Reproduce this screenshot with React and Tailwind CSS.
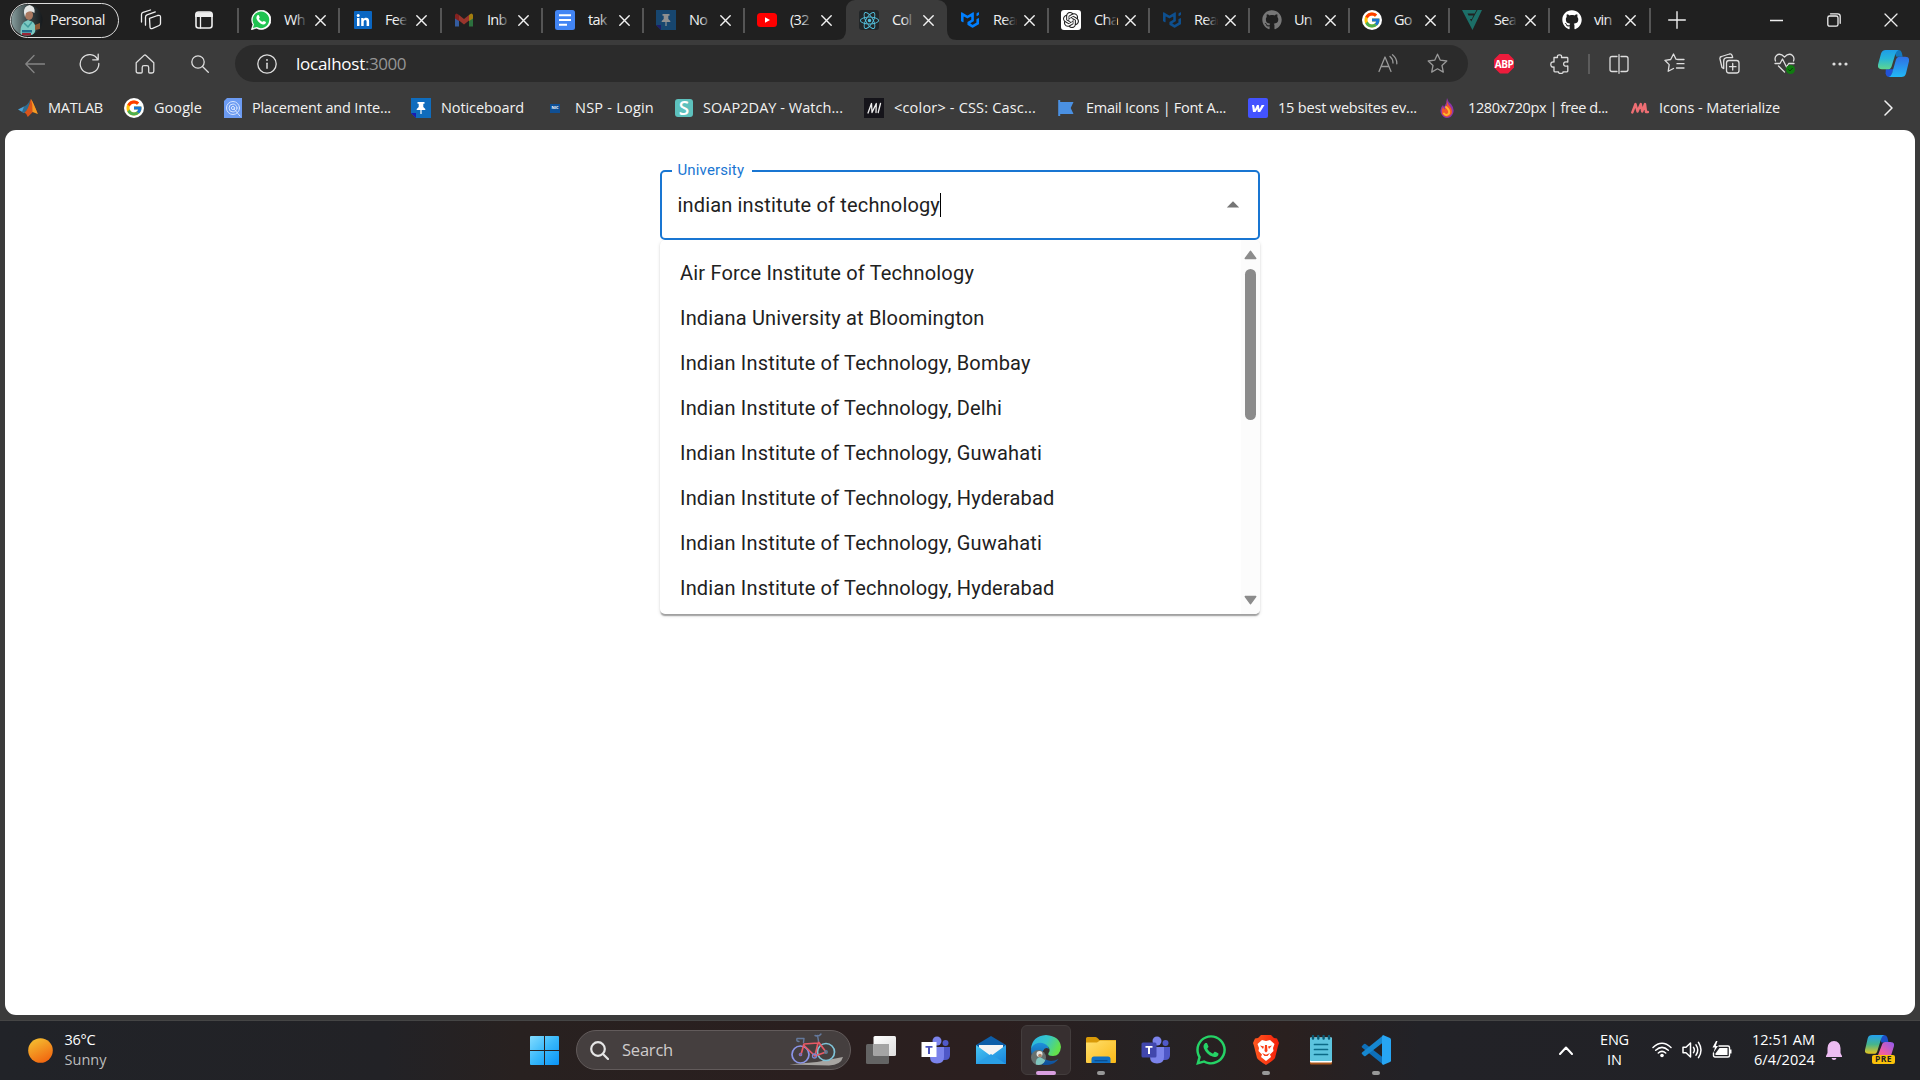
import { useLayoutEffect, useRef, useState } from "react";
import { FcGoogle } from "react-icons/fc";
import { FaGithub, FaWhatsapp } from "react-icons/fa";
import { SiMui, SiOpenai, SiReact } from "react-icons/si";

/* Text set to a given width by adjusting its letter spacing. */
function Fit({ w, children, className = "" }) {
  const ref = useRef(null);
  const [gap, setGap] = useState(0);
  useLayoutEffect(() => {
    const natural = ref.current.getBoundingClientRect().width;
    setGap((w - natural) / String(children).length);
  }, [w, children]);
  return (
    <span ref={ref} className={`inline-block whitespace-pre ${className}`} style={{ letterSpacing: `${gap}px` }}>
      {children}
    </span>
  );
}

const Svg = ({ w = 20, h = w, vb = `0 0 ${w} ${h}`, sw = 1.3, children, className = "" }) => (
  <svg width={w} height={h} viewBox={vb} fill="none" stroke="currentColor" strokeWidth={sw} strokeLinecap="round" strokeLinejoin="round" className={`block shrink-0 ${className}`}>
    {children}
  </svg>
);

/* ---------- favicons ---------- */
const WhatsAppBadge = () => (
  <Svg>
    <path d="M0.5 19.5 2 14.6A9.6 9.6 0 1 1 5.6 18.2Z" fill="#fff" stroke="#fff" strokeWidth=".8" />
    <path d="M1.9 18.1 3 14.4A8.3 8.3 0 1 1 5.9 17.1Z" fill="#1fc351" stroke="none" />
    <path d="M6.3 5.4c.5-.5 1.3-.5 1.6.1l.8 1.7c.2.6-.7 1.2-.7 1.6.6 1.4 1.8 2.5 3.2 3 .5.1 1-.9 1.6-.9l1.8.9c.5.3.4 1.2-.1 1.7-1.2 1.3-3.1 1.100-5-.1-1.700-1-3.100-2.600-3.900-4.400-.4-1.400-.1-2.700.7-3.600Z" fill="#fff" stroke="none" />
  </Svg>
);
const LinkedIn = () => (
  <Svg w={18}>
    <rect width="18" height="18" rx="1" fill="#0a66c2" stroke="none" />
    <path d="M3 7h2.500v8H3zM7.200 7h2.400v1.200c.5-.9 1.400-1.400 2.600-1.400 2.200 0 2.900 1.400 2.900 3.500V15h-2.500v-4.200c0-1.200-.3-1.900-1.300-1.900-1.100 0-1.600.8-1.600 1.900V15H7.200z" fill="#fff" stroke="none" />
    <circle cx="4.200" cy="4.400" r="1.500" fill="#fff" stroke="none" />
  </Svg>
);
const Gmail = () => (
  <Svg w={18} h={14} className="opacity-60">
    <path d="M0 2v11.500h4V5z" fill="#4285f4" stroke="none" />
    <path d="M14 5v8.500h4V2z" fill="#34a853" stroke="none" />
    <path d="M0 2v3.500L4 8V2Q1-1 0 2Z" fill="#c5221f" stroke="none" />
    <path d="M4 2l5 4 5-4v5.500L9 11.500 4 7.500z" fill="#ea4335" stroke="none" />
    <path d="M14 2v6l4-2.500V2q-1-3-4 0Z" fill="#fbbc04" stroke="none" />
  </Svg>
);
const Docs = () => (
  <Svg>
    <rect width="20" height="20" rx="2.500" fill="#4285f4" stroke="none" />
    <path d="M4 5.300h12M4 10h12M4 14.700h8" stroke="#fff" strokeWidth="2" strokeLinecap="butt" />
  </Svg>
);
const Pin = ({ dim }) => (
  <Svg className={dim ? "opacity-50" : ""}>
    <path d="M0 0h20v20H5L0 15z" fill="#0f6cbd" stroke="none" />
    <path d="M0 15h5v5z" fill="#1b1bb3" stroke="none" />
    <path d="M6.500 4h7v1.800h-1.200V9l2 2v1h-3.700v4h-1.200v-4H5.700v-1l2-2V5.800H6.500z" fill="#fff" stroke="none" />
  </Svg>
);
const YouTube = () => (
  <Svg w={20} h={14}>
    <rect width="20" height="14" rx="3.500" fill="#f00" stroke="none" />
    <path d="M8 4.200v5.600l5-2.800z" fill="#fff" stroke="none" />
  </Svg>
);
const ReactIcon = () => (
  <span className="flex size-5 items-center justify-center rounded-[3px] bg-[#222628]">
    <SiReact className="size-[19px] text-[#53c1de]" />
  </span>
);
const ChatGpt = () => (
  <span className="flex size-5 items-center justify-center rounded-[3px] bg-white">
    <SiOpenai className="size-4 text-[#222]" />
  </span>
);
const GoogleDot = () => (
  <span className="flex size-5 items-center justify-center rounded-full bg-white">
    <FcGoogle className="size-[18px]" />
  </span>
);
const FvLogo = () => (
  <Svg>
    <path d="M0 0h14.500L12.700 3.600H5.500l1 2h5L9.800 9H8l1.200 2.500L15.500 0H20L10.500 20z" fill="#1c6f68" stroke="none" />
  </Svg>
);

const tabs = [
  { icon: <WhatsAppBadge />, label: "Wh", w: "w-[101px]" },
  { icon: <LinkedIn />, label: "Fee", w: "w-[102px]", nudge: true },
  { icon: <Gmail />, label: "Inb", w: "w-[101px]" },
  { icon: <Docs />, label: "tak", w: "w-[101px]" },
  { icon: <Pin dim />, label: "No", w: "w-[101px]" },
  { icon: <YouTube />, label: "(32", w: "w-[102px]" },
  { icon: <ReactIcon />, label: "Col", w: "w-[101px]", active: true },
  { icon: <SiMui className="size-[18px] text-[#007fff]" />, label: "Rea", w: "w-[101px]", bare: true },
  { icon: <ChatGpt />, label: "Cha", w: "w-[101px]" },
  { icon: <SiMui className="size-[18px] text-[#0e4f8e]" />, label: "Rea", w: "w-[100px]", narrow: true },
  { icon: <FaGithub className="size-5 text-[#777]" />, label: "Un", w: "w-[100px]", narrow: true },
  { icon: <GoogleDot />, label: "Go", w: "w-[100px]", narrow: true },
  { icon: <FvLogo />, label: "Sea", w: "w-[100px]", narrow: true },
  { icon: <FaGithub className="size-5 text-white" />, label: "vin", w: "w-[100px]", narrow: true },
];

function Tab({ icon, label, w, active, bare, narrow, nudge }) {
  const fade = active ? "to-[#3b3b3b]" : "to-[#202020]";
  return (
    <div className={`relative flex h-10 shrink-0 items-center ${w} ${active ? "rounded-t-[9px] bg-[#3b3b3b]" : ""}`}>
      {active ? (
        <>
          <Svg w={10} className="absolute bottom-0 -left-[10px]"><path d="M10 0v10H0Q10 10 10 0Z" fill="#3b3b3b" stroke="none" /></Svg>
          <Svg w={10} className="absolute -right-[10px] bottom-0"><path d="M0 0v10h10Q0 10 0 0Z" fill="#3b3b3b" stroke="none" /></Svg>
        </>
      ) : null}
      <span className={`-ml-px h-[25px] w-[2px] ${active || bare ? "" : "bg-[#555]"}`} />
      <span className={`flex w-5 shrink-0 justify-center ${nudge ? "mr-[-1px] ml-[13px]" : "ml-[12px]"}`}>{icon}</span>
      <span className={`relative w-[23px] shrink-0 text-[14.5px] leading-5 whitespace-nowrap tracking-[-0.700px] text-[#f2f2f2] ${narrow ? "ml-[12px]" : "ml-[13px]"}`}>
        {label}
        <span className={`absolute inset-y-0 right-0 w-[12px] bg-linear-to-r from-transparent ${fade}`} />
      </span>
      <Svg w={11} sw={1.4} className="ml-[8px] mt-px text-[#f2f2f2]"><path d="M.8.8l9.400 9.400M10.200.8.8 10.200" /></Svg>
    </div>
  );
}

const Avatar = () => (
  <svg width="32" height="32" viewBox="0 0 32 32" className="block">
    <defs>
      <clipPath id="avatar"><circle cx="16" cy="16" r="15.500" /></clipPath>
      <linearGradient id="avatarBg"><stop offset="0" stopColor="#8aa0a0" /><stop offset=".5" stopColor="#3c4a4c" /><stop offset="1" stopColor="#15181b" /></linearGradient>
    </defs>
    <g clipPath="url(#avatar)">
      <rect width="32" height="32" fill="url(#avatarBg)" />
      <path d="M10 32Q8 23 13 18l4-2 5 2q4 4 2 10l-3 4z" fill="#7cc8c2" />
      <path d="M13 19l4 4 4-5" stroke="#3f9a9b" strokeWidth="1.500" fill="none" />
      <ellipse cx="18" cy="11" rx="4" ry="5" fill="#a87860" />
      <path d="M13 9Q12.500 2 18.500 1 24.500 2 23.500 9q-4.500-3.500-8.500 0l-1 4z" fill="#e4e6e5" />
      <path d="M24 21l5-2v6l-5 1z" fill="#8a5735" />
      <path d="M11 26h10v2.500H11z" fill="#236b8b" />
      <path d="M11 29h9v3h-9z" fill="#9c2536" />
    </g>
  </svg>
);

function TabStrip() {
  return (
    <div className="flex h-10 items-center bg-[#202020] text-[#eee]">
      <div className="ml-[10px] flex h-[35px] w-[109px] shrink-0 items-center rounded-full border-[1.5px] border-[#ddd]">
        <Avatar />
        <Fit w={55} className="ml-[7px] text-[14.5px] leading-5">Personal</Fit>
      </div>
      <div className="flex w-[118px] items-center">
        <Svg w={22} className="ml-[21px]" sw={1.300}>
          <path d="M9.500 9.300 17.500 6.500q3-.8 3 1.500v6.500q0 1.500-1.300 2l-6.600 2.800q-2.600 1-2.600-1.300z" />
          <path d="M5.500 16.200V8.200q0-1.700 1.500-2.300l8.300-3M1.500 13V5.500Q1.500 4 3 3.400L10.500 1" />
        </Svg>
        <Svg w={18} className="ml-[33px]" sw={1.600}>
          <rect x="1" y="1" width="16" height="16" rx="2.500" /><path d="M1 4.500h16M2 2.800h14" strokeWidth="3" /><path d="M5.500 5v12" strokeWidth="1.300" />
        </Svg>
      </div>
      <div className="ml-px flex">
        {tabs.map((t, i) => <Tab key={i} {...t} />)}
      </div>
      <span className="h-[25px] w-[2px] shrink-0 bg-[#555]" />
      <Svg w={18} sw={1.400} className="ml-[17px]"><path d="M9 .7v16.600M.7 9h16.600" /></Svg>
      <div className="ml-[62px] flex flex-1 items-center">
        <span className="flex w-[57px] justify-center"><Svg w={13} sw={1.300}><path d="M0 6.500h13" /></Svg></span>
        <span className="flex w-[57px] justify-center"><Svg w={14}><rect x=".8" y="3" width="10.200" height="10.200" rx="1.800" /><path d="M3.500.8h7.200q2.500 0 2.500 2.500v7" /></Svg></span>
        <span className="flex w-[58px] justify-center"><Svg w={14}><path d="M1 1l12 12M13 1 1 13" /></Svg></span>
      </div>
    </div>
  );
}

const Cell = ({ w = "w-[55px]", children }) => <span className={`flex shrink-0 items-center justify-center ${w}`}>{children}</span>;

const CopilotLogo = () => (
  <svg width="31" height="27" viewBox="0 0 32 28" className="block">
    <defs>
      <linearGradient id="cpA" x1="0" y1="0" x2="0" y2="1"><stop offset="0" stopColor="#1e9de8" /><stop offset=".45" stopColor="#27b5d8" /><stop offset="1" stopColor="#5fd68e" /></linearGradient>
      <linearGradient id="cpB" x1="0" y1="0" x2="0" y2="1"><stop offset="0" stopColor="#2f6fe4" /><stop offset="1" stopColor="#22b8f6" /></linearGradient>
    </defs>
    <path d="M8 20h8l-3 8h-1q-3.500 0-4.200-4z" fill="#2153d8" />
    <path d="M16 0h5q3 0 3.800 3.500l.7 3.500H19z" fill="#1478bd" />
    <path d="M8 0h13q-2 1-3 4l-4 13q-1 3-4 3H4q-5 0-4-5l3-11Q4 0 8 0Z" fill="url(#cpA)" />
    <path d="M24 28H11q2.500-1 3.500-4l4-14q1-3 4-3H28q5 0 4 5l-3 12q-1 4-5 4Z" fill="url(#cpB)" />
  </svg>
);

function Toolbar() {
  return (
    <div className="flex h-[47px] items-center bg-[#3b3b3b] pl-[7px] text-[#dedede]">
      <Cell><Svg className="text-[#858585]"><path d="M19.500 10H.8M9 1.500.8 10 9 18.500" /></Svg></Cell>
      <Cell><Svg w={21}><path d="M18.700 6.500A9.300 9.300 0 1 0 19.800 10.500M19.200 1.200v5.600h-5.500" /></Svg></Cell>
      <Cell><Svg><path d="M1.200 8.700 9 1.400q1-.9 2 0l7.800 7.300v8.500q0 1.800-1.800 1.800h-2.300q-1 0-1-1v-4.500q0-1.800-1.800-1.800H9q-1.800 0-1.800 1.800V18q0 1-1 1H3q-1.800 0-1.800-1.800z" /></Svg></Cell>
      <Cell><Svg w={18}><circle cx="7" cy="7" r="6.200" /><path d="M11.500 11.500l5.800 5.800" /></Svg></Cell>
      <div className="ml-[8px] flex h-[37px] w-[1233px] shrink-0 items-center rounded-full bg-[#2b2b2b]">
        <Svg className="ml-[22px]"><circle cx="10" cy="10" r="9.200" /><path d="M10 9.200v5" strokeWidth="1.500" /><circle cx="10" cy="6" r=".9" fill="currentColor" stroke="none" /></Svg>
        <span className="ml-[19px] text-[17px] leading-6">
          <Fit w={69} className="text-white">localhost</Fit>
          <Fit w={41} className="text-[#959595]">:3000</Fit>
        </span>
        <Svg className="ml-auto text-[#999]"><path d="M1 17.500 7 3l6 14.500M3 12.500h8M12 2.500q3 2.500 3 6.500M14.500.8q4.500 3.500 4.300 9" /></Svg>
        <Svg w={21} className="mr-[20px] ml-[29px] text-[#999]"><path d="M10.500 1.200l2.800 6 6.500.8-4.800 4.500 1.300 6.600-5.800-3.300-5.800 3.300L6 12.500 1.200 8l6.500-.8z" /></Svg>
      </div>
      <span className="w-2" />
      <Cell w="w-[56px]">
        <span className="flex size-[20px] items-center justify-center bg-[#ed1c3c] text-[10px] leading-none font-bold tracking-[-0.5px] text-white [clip-path:polygon(30%_0,70%_0,100%_30%,100%_70%,70%_100%,30%_100%,0_70%,0_30%)]">ABP</span>
      </Cell>
      <Cell w="w-[56px]"><Svg><path d="M4 3.500h3.500q-.5-2.700 2-2.700t2 2.700H17q.8 0 .8.800V8q-4.200-.8-4.200 2t4.200 2v5q0 .8-.8.800h-4q.3 1.700-2.200 1.700T8.500 17.800H4.800q-.8 0-.8-.8v-4Q.8 13.500.8 10.500T4 8z" /></Svg></Cell>
      <span className="mr-px h-5 w-[2px] bg-[#5c5c5c]" />
      <Cell w="w-[56px]"><Svg w={20}><path d="M8 2.500H3Q1 2.500 1 4.500v11q0 2 2 2h5M12 2.500h5q2 0 2 2v11q0 2-2 2h-5M10 .7v18.600" /></Svg></Cell>
      <Cell><Svg w={21}><path d="M14 6.500l-2-.3L9.500 1 6.700 6.500.9 7.300l4.300 4.300-1 6.700 5.300-2.800M20 6.500h-5.500M20 10.700h-7M20 15h-7.500" /></Svg></Cell>
      <Cell><Svg w={21}><rect x="7.500" y="7.500" width="12.500" height="12.500" rx="2.500" /><path d="M13.700 10.500v6.500M10.500 13.700H17M4.500 15.500 3 14.500 1 6Q.6 4 2.500 3.500l8-2.500q1.800-.5 2.500 1.300l.7 2.200M4.700 15.500V8q0-3 3-3.300h5.500" /></Svg></Cell>
      <Cell>
        <Svg w={21}><path d="M1.500 8Q.2 4.500 2.500 2.500 6-.5 10.500 4q4.500-4.500 8-1.500 2.300 2 1 5.500M1 10.500h5L8.500 6l4 8 2.200-3.500H20M4.500 13l6 6" /><circle cx="16.500" cy="16.500" r="4.500" fill="#107c10" stroke="none" /><path d="M14.500 16.600l1.400 1.400 2.500-2.700" stroke="#0a3d0a" strokeWidth="1" /></Svg>
      </Cell>
      <Cell><Svg w={16} h={4}><g fill="currentColor" stroke="none"><circle cx="2" cy="2" r="1.600" /><circle cx="8" cy="2" r="1.600" /><circle cx="14" cy="2" r="1.600" /></g></Svg></Cell>
      <Cell w="w-[53px]"><CopilotLogo /></Cell>
    </div>
  );
}

/* ---------- bookmarks ---------- */
const Matlab = () => (
  <Svg>
    <path d="M0 11.500 6 8.500l3 2.500-3 4z" fill="#4aa3d8" stroke="none" />
    <path d="M6 8.500Q10 7 12.500 1L10 12l-4 3-2-1z" fill="#2f6c8f" stroke="none" />
    <path d="M12.800.8Q15 4 19.800 16q-3-3-5-2l-5 5q-1.500-4-3.300-4.500Q10 13 12.800.8Z" fill="#d9541a" stroke="none" />
    <path d="M13 1q2 6 1.500 13l5.300 2Q15 4 13 1Z" fill="#f59b23" stroke="none" />
  </Svg>
);
const Placement = () => (
  <Svg w={18} h={20}>
    <path d="M3 0h15v20H0V3z" fill="#6c9bf2" stroke="none" />
    <g stroke="#d7e5ff" strokeWidth="1"><circle cx="9" cy="10" r="6.500" /><circle cx="9" cy="10" r="4" /><circle cx="9" cy="10" r="1.600" /><path d="M10 11l6 7" /></g>
  </Svg>
);
const bookmarks = [
  { icon: <Matlab />, label: "MATLAB", text: 55, w: "w-[106px]" },
  { icon: <GoogleDot />, label: "Google", text: 48, w: "w-[99px]" },
  { icon: <Placement />, label: "Placement and Inte...", text: 139, w: "w-[188px]", near: true },
  { icon: <Pin />, label: "Noticeboard", text: 83, w: "w-[134px]" },
  { icon: <span className="flex h-[9px] w-[10px] items-center justify-center bg-[#0f4f94] text-[4px] leading-none font-bold text-white">NIC</span>, label: "NSP - Login", text: 79, w: "w-[129px]" },
  { icon: <span className="flex size-[18px] items-center justify-center rounded-[3px] bg-[#5dc1bd] text-[19px] leading-none font-semibold text-white">S</span>, label: "SOAP2DAY - Watch...", text: 140, w: "w-[190px]", near: true },
  { icon: <Svg><rect width="20" height="20" fill="#15141a" stroke="none" /><path d="M4 15 7.500 5.500 8 14.500 12.300 5.500 12 14.500M16.500 5.500l-2.300 9" stroke="#eee" strokeWidth="1.300" /></Svg>, label: "<color> - CSS: Casc...", text: 142, w: "w-[192px]" },
  { icon: <Svg w={16}><path d="M1.200 0v16" stroke="#4a90e2" strokeWidth="2" /><path d="M1 2h14.500L12.700 8l2.800 6H1z" fill="#4a90e2" stroke="none" /></Svg>, label: "Email Icons | Font A...", text: 140, w: "w-[192px]" },
  { icon: <Svg><rect width="20" height="20" rx="2" fill="#4353ff" stroke="none" /><path d="M4 7h2q.8 2 .9 4.300L9 7h1.800l.7 4.300L13.600 7H16.500l-4.300 7H9.800L9.400 11l-1.900 3H5z" fill="#fff" stroke="none" /></Svg>, label: "15 best websites ev...", text: 139, w: "w-[190px]" },
  { icon: <Svg w={14} h={20}><path d="M7 0q1 4 4 6 4 5 2 9.500Q11 20 7 20T.8 15Q-.5 10 3 7l1 2Q7 5 7 0Z" fill="#8d35a8" stroke="none" /><path d="M6.500 2q1 4 3.500 6.500 3 4 1.500 7.500-2 3-4.500 3t-5-3Q1 12 3 9l1.500 2.500Q8 7 6.500 2Z" fill="#f4572b" stroke="none" /><path d="M6 9q4 3 3 6.500-3 3-5 0" stroke="#ffb52e" strokeWidth="2" /></Svg>, label: "1280x720px | free d...", text: 140, w: "w-[192px]", far: true },
  { icon: <Svg w={18} h={12}><path d="M1.300 10.500 4.500 2l2 7.500L9.800 2l1.400 7.500L14 2l1 8h2" stroke="#ee6e73" strokeWidth="2.400" /></Svg>, label: "Icons - Materialize", text: 121, w: "w-[160px]", near: true },
];

function Bookmarks() {
  return (
    <div className="flex h-[43px] items-center bg-[#3b3b3b] pb-[1px] pl-[18px] text-[#f2f2f2]">
      {bookmarks.map((b) => (
        <div key={b.label} className={`flex shrink-0 items-center ${b.w}`}>
          <span className={`flex w-5 shrink-0 justify-center ${b.far ? "-ml-px mr-px" : ""}`}>{b.icon}</span>
          <Fit w={b.text} className={`text-[14.5px] leading-5 ${b.near ? "ml-[9px]" : "ml-[10px]"}`}>{b.label}</Fit>
        </div>
      ))}
      <Svg w={9} h={16} sw={1.500} className="mr-[27px] ml-auto"><path d="M1 1l7 7-7 7" /></Svg>
    </div>
  );
}

/* ---------- page ---------- */
const options = [
  "Air Force Institute of Technology",
  "Indiana University at Bloomington",
  "Indian Institute of Technology, Bombay",
  "Indian Institute of Technology, Delhi",
  "Indian Institute of Technology, Guwahati",
  "Indian Institute of Technology, Hyderabad",
  "Indian Institute of Technology, Guwahati",
  "Indian Institute of Technology, Hyderabad",
];

function Autocomplete() {
  return (
    <div className="mx-auto w-[600px] pt-10 font-[Roboto,sans-serif] text-[20px] text-[#212121]">
      <div className="relative flex h-[70px] items-center rounded-[5px] border-2 border-[#1976d2] pl-[15.500px]">
        <span className="absolute -top-[12px] left-[10px] h-5 w-[80px] bg-white pl-[5.500px] text-[15px] leading-[20px] tracking-[0.14px] text-[#1976d2]">University</span>
        <Fit w={262.5}>indian institute of technology</Fit>
        <span className="h-6 w-px bg-black" />
        <Svg w={14} h={7} className="mr-[18px] mb-[2px] ml-auto"><path d="M.8 6.500 7 .3l6.200 6.200z" fill="#757575" stroke="none" /></Svg>
      </div>
      <div className="flex h-[374px] overflow-hidden rounded-[5px] bg-white shadow-[0_2.500px_1.250px_-1.250px_rgba(0,0,0,0.2),0_1.250px_1.250px_0_rgba(0,0,0,0.14),0_1.250px_3.750px_0_rgba(0,0,0,0.12)]">
        <ul className="flex-1 pt-[10px]">
          {options.map((o, i) => (
            <li key={i} className="flex h-[45px] items-center pl-5 leading-[30px] tracking-[0.188px]">{o}</li>
          ))}
        </ul>
        <div className="flex w-[19px] flex-col items-center bg-[#fcfcfc] pt-[10px] pb-[9px]">
          <Svg w={13} h={10}><path d="M1.200 8.500 6.500 1.200l5.300 7.300z" fill="#8b8b8b" stroke="#8b8b8b" /></Svg>
          <span className="mt-[9px] h-[151px] w-[11px] rounded-full bg-[#8b8b8b]" />
          <Svg w={13} h={10} className="mt-auto"><path d="M1.200 1.500h10.600L6.500 8.800z" fill="#8b8b8b" stroke="#8b8b8b" /></Svg>
        </div>
      </div>
    </div>
  );
}

/* ---------- taskbar ---------- */
const Bike = () => (
  <Svg w={56} h={34} className="ml-auto mr-[5px]">
    <path d="M0 31.500 28 29l26-5q-2 8-14 8.500z" fill="#a8a5a2" stroke="none" />
    <g strokeWidth="1.700"><circle cx="11.500" cy="21.500" r="8.500" stroke="#8b95e8" /><circle cx="37" cy="19" r="8.500" stroke="#7fc3d8" /></g>
    <path d="M12 21.500 15 11l14-1L26 23 14.500 12M29.500 9l7.500 10-11 4" stroke="#e85a66" strokeWidth="1.700" />
    <path d="M14.500 9.500 15 5.500H8M8 5.500q-1 3 2 3M29.500 8l-1-5.500M26 2.500q4 1.500 6-1.500" stroke="#64799c" strokeWidth="1.400" />
    <circle cx="25.500" cy="23" r="2" stroke="#7a86d0" /><circle cx="11.500" cy="21.500" r="1.200" stroke="#8070bc" /><circle cx="37" cy="19" r="1.300" stroke="#54819b" />
  </Svg>
);

const Teams = ({ white }) => (
  <Svg w={30} h={28}>
    <g stroke="none">
      <circle cx="24.500" cy="7" r="3" fill="#5059c9" />
      <path d="M18 11h11v8q0 5-5 5h-6z" fill="#4f58c8" />
      <circle cx="16" cy="5" r="4.500" fill="#7b83eb" />
      <path d="M9 11h14v10q0 6.500-7 6.500T9 21z" fill="#7b83eb" />
      <rect x="0.500" y={white ? 6 : 6.500} width="15" height="15" rx={white ? 0 : 1.500} fill={white ? "#fff" : "#4147ad"} />
      <path d="M4.500 10h7v1.800H9V18H7v-6.200H4.500z" fill={white ? "#4b53bc" : "#fff"} />
    </g>
  </Svg>
);

const TaskView = () => (
  <Svg w={30} h={28}>
    <defs><linearGradient id="tv" x2="1" y2="1"><stop stopColor="#fff" /><stop offset="1" stopColor="#ddd" /></linearGradient></defs>
    <g stroke="none"><rect x="0" y="8" width="23" height="20" rx="1.500" fill="#646464" /><rect x="7.500" y="0" width="22.500" height="20" rx="1.500" fill="url(#tv)" /><rect x="7.500" y="8" width="15.500" height="12" fill="#a4a4a4" /></g>
  </Svg>
);

const Mail = () => (
  <Svg w={30} h={28}>
    <defs><linearGradient id="ml" x2="1" y2="1"><stop stopColor="#48c6f3" /><stop offset="1" stopColor="#1683dc" /></linearGradient></defs>
    <g stroke="none"><path d="M0 9 15 0l15 9v3H0z" fill="#0d5ea8" /><path d="M3 9h24v10H3z" fill="#f4f4f4" /><path d="M0 9l15 11L30 9v19H0z" fill="url(#ml)" /><path d="M0 28 15 18l15 10z" fill="#2a9fe6" /></g>
  </Svg>
);

const Edge = () => (
  <Svg w={30}>
    <defs>
      <linearGradient id="eg1" x1="0" y1="0" x2="1" y2=".4"><stop stopColor="#27b3e8" /><stop offset=".55" stopColor="#36c6c8" /><stop offset="1" stopColor="#63e04c" /></linearGradient>
      <linearGradient id="eg2" x1="0" y1="0" x2="0" y2="1"><stop stopColor="#1e94de" /><stop offset="1" stopColor="#0f4d97" /></linearGradient>
      <clipPath id="edgeBadge"><circle cx="7.500" cy="22.500" r="7.500" /></clipPath>
    </defs>
    <g stroke="none">
      <path d="M0 14Q2 6 10 7q7 1 8 7-4-3-6 2-1 9 8 10 4 0 7.500-2Q22 31 13 30 0 28 0 14Z" fill="url(#eg2)" />
      <path d="M0 14Q1 1 15 0q14 1 15 12-1 9-8 9-6 0-4.500-3Q20 15 17 11.500 13 7 7 8 2 9 0 14Z" fill="url(#eg1)" />
      <g clipPath="url(#edgeBadge)"><rect y="15" width="15" height="15" fill="#66706e" /><path d="M5 30q-1-7 4-8l5 3v5z" fill="#80c7c0" /><circle cx="8.500" cy="19" r="3" fill="#e4e4e1" /><circle cx="9" cy="20.500" r="1.800" fill="#b38468" /></g>
    </g>
  </Svg>
);

const Folder = () => (
  <Svg w={30} h={27}>
    <defs><linearGradient id="fd" x2="1" y2="1"><stop stopColor="#ffdf6d" /><stop offset="1" stopColor="#fbb916" /></linearGradient></defs>
    <g stroke="none"><path d="M0 1.500Q0 0 1.500 0h8q1.500 0 2.500 1.500l1.500 1.500H30v4H0z" fill="#d99a08" /><path d="M0 5.500h11L14 3.500h16V25q0 1-1 1H1q-1 0-1-1z" fill="url(#fd)" /><path d="M5.500 26v-4q0-2.500 2.500-2.500h14q2.500 0 2.500 2.500v4z" fill="#0f70c4" /><path d="M8.500 23h13v1.300h-13z" fill="#0b4f90" /></g>
  </Svg>
);

const Notepad = () => (
  <Svg w={22} h={30}>
    <g stroke="none"><rect y="25" width="22" height="4.500" rx="1" fill="#a9571c" /><rect y="2.500" width="22" height="25" rx="1" fill="#fff" /><rect y="2.500" width="22" height="23.500" rx="1" fill="#5cc4de" /></g>
    <path d="M4.500 9.500h13M4.500 14.500h13M4.500 19.500h13" stroke="#0b6a86" strokeWidth="1.700" /><path d="M3 1v2.500M8.300 1v2.500M13.600 1v2.500M19 1v2.500" stroke="#0a5a74" strokeWidth="2.400" />
  </Svg>
);

const VsCode = () => (
  <Svg w={30}>
    <g stroke="none"><path d="M1 11 3 9q.8-.6 1.600 0L22 22.500v7L1 12.500q-.7-.8 0-1.500Z" fill="#0e6fb8" /><path d="M1 19l2 2q.8.600 1.600 0L22 7.500V.5L1 17.500q-.7.800 0 1.500Z" fill="#1687d0" /><path d="M22 0l7 3q1 .5 1 1.500v21q0 1-1 1.500l-7 3-1-1.500V1.500z" fill="#27a5f3" /></g>
  </Svg>
);

const Brave = () => (
  <Svg w={26} h={30}>
    <defs><linearGradient id="br" x2="1"><stop stopColor="#ff5a20" /><stop offset="1" stopColor="#f41f0a" /></linearGradient></defs>
    <g stroke="none"><path d="M8 0h10l3 3 3 .5L26 8l-1 3-3 12q-1 2-9 7-8-5-9-7L1 11 0 8l2-4.500L5 3z" fill="url(#br)" />
      <path d="M13 6l4-1 4.500 4-1.500 4 .5 3-3.500 3.500L18 22l-5 4-5-4 1-2.500L5.500 16l.5-3L4.500 9 9 5z" fill="#fff" />
      <path d="M7 10.500l4 1-1 2.500zM19 10.500l-4 1 1 2.500zM12 10h2l.5 6-1.500 1.500L11.500 16zM9 18l4 1.800L17 18l-2.500 3h-3z" fill="#fb3d15" /></g>
  </Svg>
);

const apps = [
  { icon: <TaskView /> },
  { icon: <Teams white /> },
  { icon: <Mail /> },
  { icon: <Edge />, active: true },
  { icon: <Folder />, open: true },
  { icon: <Teams /> },
  { icon: <FaWhatsapp className="size-[34px] text-[#25d366]" /> },
  { icon: <Brave />, open: true },
  { icon: <Notepad /> },
  { icon: <VsCode />, open: true },
];

const CopilotPre = () => (
  <div className="relative ml-[23px] h-[30px] w-[30px]">
    <svg width="29" height="22" viewBox="0 0 32 28" preserveAspectRatio="none" className="block">
      <defs>
        <linearGradient id="ppA" x1="0" y1="0" x2="0" y2="1"><stop offset="0" stopColor="#23a0f0" /><stop offset=".5" stopColor="#46b58c" /><stop offset="1" stopColor="#e8c51d" /></linearGradient>
        <linearGradient id="ppB" x1="1" y1="0" x2="0" y2="1"><stop offset="0" stopColor="#8e5bf0" /><stop offset=".6" stopColor="#ee5da6" /><stop offset="1" stopColor="#f7776a" /></linearGradient>
      </defs>
      <path d="M16 0h5q3 0 3.800 3.500l1.200 6H18z" fill="#1c50c8" />
      <path d="M8 0h13q-2 1-3 4l-4 15q-1 5-4 5H4q-5 0-4-5l3-15Q4 0 8 0Z" fill="url(#ppA)" />
      <path d="M24 30H11q2.500-1 3.500-5l4-12q1-4 4-4H28q5 0 4 5l-3 11q-1 5-5 5Z" fill="url(#ppB)" />
    </svg>
    <span className="absolute right-0 bottom-[1px] flex h-[9px] w-[23px] items-center justify-center rounded-[2px] bg-[#fbc20a] text-[8.500px] leading-none font-bold tracking-[0.5px] text-[#222]">PRE</span>
  </div>
);

function Taskbar() {
  return (
    <div className="flex h-[60px] shrink-0 items-center border-t border-[#454545] bg-[linear-gradient(90deg,#212328_0%,#222226_20%,#282120_27%,#2a1f1f_42%,#2b1f1f_52%,#252224_60%,#2a201f_67%,#222227_74%,#212226_100%)] pb-px text-white">
      <Svg w={25} className="ml-[27.500px]">
        <defs><linearGradient id="sun" x1=".2" y1="0" x2=".7" y2="1"><stop stopColor="#f4bf31" /><stop offset="1" stopColor="#f1640f" /></linearGradient></defs>
        <circle cx="12.500" cy="12.500" r="12.300" fill="url(#sun)" stroke="none" />
      </Svg>
      <div className="ml-[12px] flex w-[465.500px] shrink-0 flex-col items-start text-[14.5px] leading-5">
        <Fit w={31}>36°C</Fit>
        <Fit w={42} className="text-[#bdbdbd]">Sunny</Fit>
      </div>
      <Svg w={29}>
        <defs><linearGradient id="win" x2="1" y2="1"><stop stopColor="#83dcff" /><stop offset=".5" stopColor="#38b8fa" /><stop offset="1" stopColor="#0993f6" /></linearGradient></defs>
        <path d="M1 0h13v14H0V1Q0 0 1 0ZM15 0h13q1 0 1 1v13H15zM0 15h14v14H1q-1 0-1-1zM15 15h14v13q0 1-1 1H15z" fill="url(#win)" stroke="none" />
      </Svg>
      <div className="ml-[17px] flex h-10 w-[275px] shrink-0 items-center rounded-full border border-[#625b5b] bg-[#453f3f]">
        <Svg w={19} sw={2.200} className="ml-[13px] text-[#e6e6e6]"><circle cx="8" cy="8" r="6.800" /><path d="M13 13l5 5" /></Svg>
        <Fit w={51} className="ml-[13px] text-[16.5px] leading-6 text-[#cfcccc]">Search</Fit>
        <Bike />
      </div>
      <div className="ml-[2.500px] flex">
        {apps.map((a, i) => (
          <div key={i} className="flex w-[55px] justify-center">
            <div className={`relative flex size-[50px] items-center justify-center rounded-md ${a.active ? "border border-[#433d3d] bg-[#372f30]" : ""}`}>
              {a.icon}
              {a.active ? <span className="absolute -bottom-px h-1 w-5 rounded-full bg-[#d99fe0]" /> : null}
              {a.open ? <span className="absolute bottom-0 h-1 w-2 rounded-full bg-[#989898]" /> : null}
            </div>
          </div>
        ))}
      </div>
      <div className="ml-auto flex items-center pr-[25px]">
        <Svg w={14} h={9} sw={2}><path d="M1 8l6-6.500L13 8" /></Svg>
        <div className="ml-[27px] flex w-[29px] flex-col items-center text-[14.5px] leading-5">
          <Fit w={29}>ENG</Fit>
          <Fit w={15}>IN</Fit>
        </div>
        <Svg w={20} h={16} sw={1.500} className="ml-[23px]"><path d="M1 5.500Q10-3 19 5.500M3.700 8.300q6.300-5.800 12.600 0M6.300 11q3.700-3.200 7.400 0" /><circle cx="10" cy="13.500" r="1.800" fill="#fff" stroke="none" /></Svg>
        <Svg w={20} h={18} sw={1.500} className="ml-[10px]"><path d="M1 6.300h3L8.500 2v14L4 11.700H1zM11.500 6.300q1.800 2.700 0 5.400M14 3.800q3.500 5.200 0 10.400M16.500 1.300q5 7.700 0 15.400" /></Svg>
        <Svg w={20} h={18} sw={1.400} className="ml-[10px]"><path d="M7 5h9q1.500 0 1.500 1.500v8q0 1.500-1.500 1.500H3q-1.500 0-1.500-1.500V12" /><path d="M7.500 7H15.500v7H3.500V12.500z" fill="#fff" stroke="none" /><path d="M17.500 8.500h2v4h-2z" fill="#fff" stroke="none" /><path d="M4 0 .5 6.500H3L1.500 11.500 6 5H3.800L5.500 0z" fill="#fff" stroke="none" /></Svg>
        <div className="ml-[20px] flex flex-col items-end text-[14.5px] leading-5">
          <Fit w={63}>12:51 AM</Fit>
          <Fit w={61}>6/4/2024</Fit>
        </div>
        <Svg w={16} h={19} className="ml-[11px]"><path d="M0 15 1.500 12V7Q2 .3 8 0q6 .3 6.500 7v5L16 15v1H0zM5.500 17h5q-.5 2-2.500 2t-2.500-2Z" fill="#edbcf2" stroke="none" /></Svg>
        <CopilotPre />
      </div>
    </div>
  );
}

export default function App() {
  return (
    <div className="flex h-[1080px] w-[1920px] flex-col overflow-hidden bg-[#3b3b3b] font-['Open_Sans','Noto_Sans',sans-serif]">
      <TabStrip />
      <Toolbar />
      <Bookmarks />
      <main className="mx-[5px] mb-[5px] flex-1 rounded-[11px] bg-white">
        <Autocomplete />
      </main>
      <Taskbar />
    </div>
  );
}
